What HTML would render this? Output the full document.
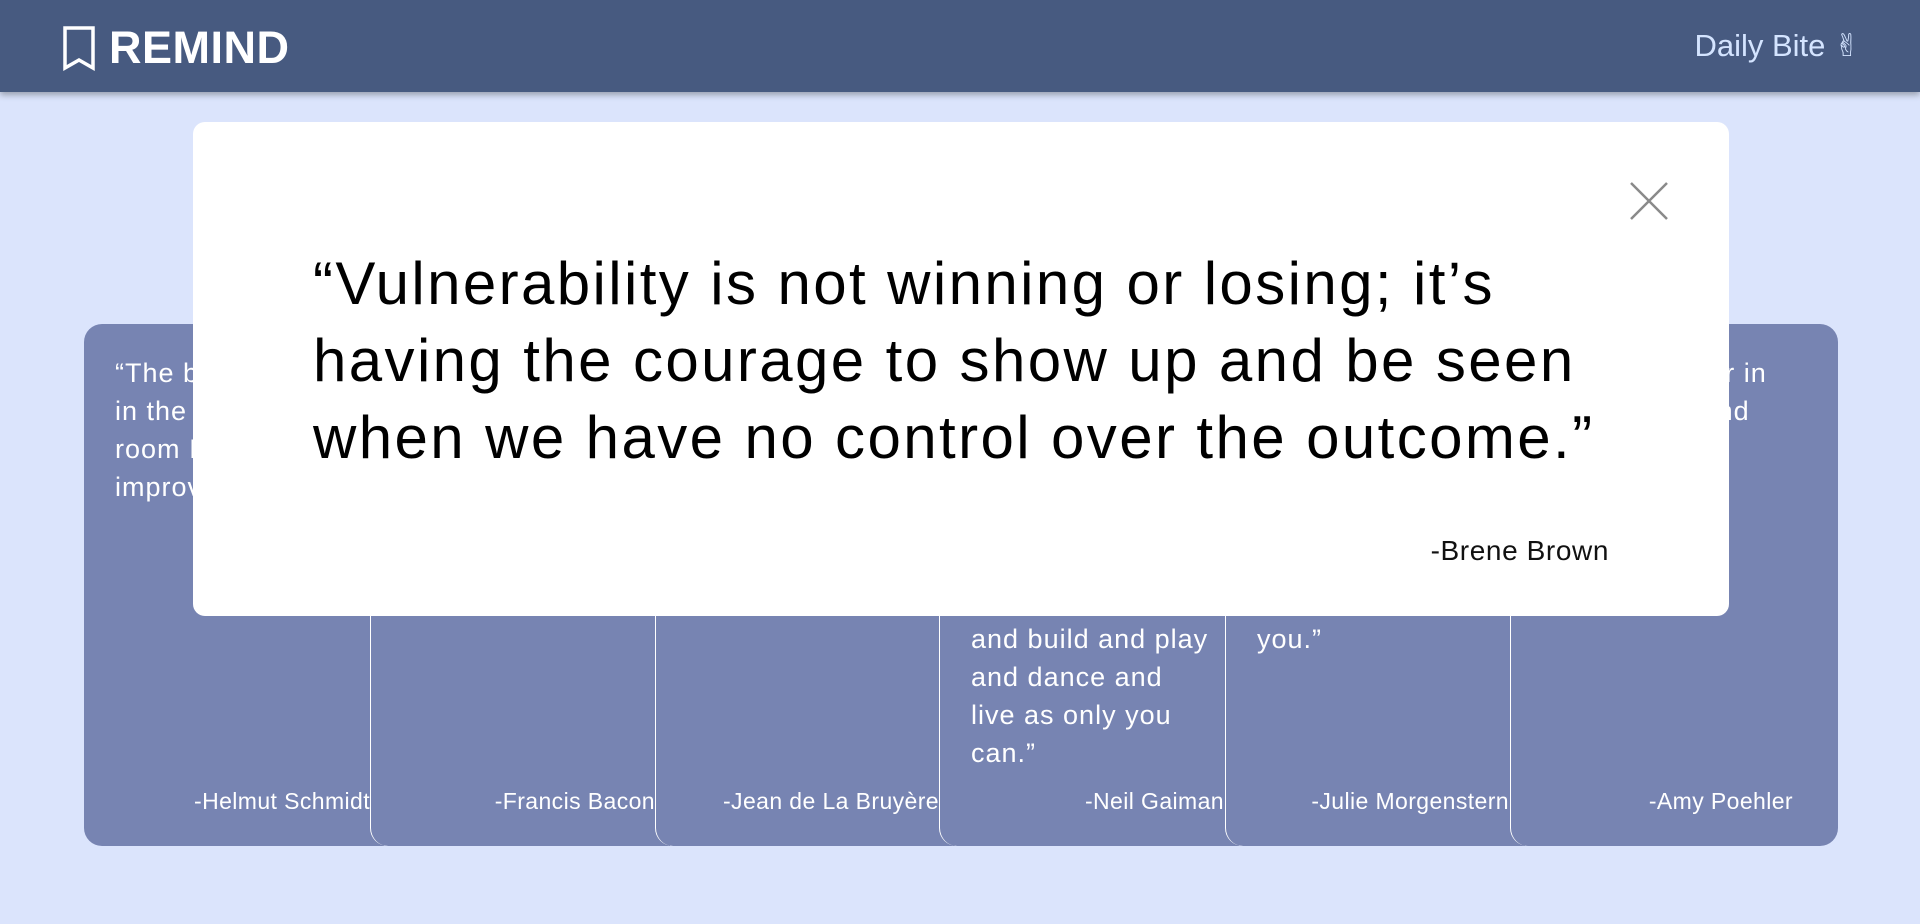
<!DOCTYPE html>
<html><head><meta charset="utf-8"><style>
*{margin:0;padding:0;box-sizing:border-box}
body{width:1920px;height:924px;overflow:hidden;background:#dbe4fc;font-family:"Liberation Sans","DejaVu Sans",sans-serif;position:relative}
.hdr{position:absolute;left:0;top:0;width:1920px;height:92px;background:#475a80;box-shadow:0 3px 6px rgba(0,0,0,.3);z-index:3}
.logo{position:absolute;left:109px;top:22px;color:#fff;font-size:45px;font-weight:bold;letter-spacing:0.5px}
.bm{position:absolute;left:62px;top:25px}
.db{position:absolute;right:60px;top:28px;color:#d4e4ff;font-size:31px}
.card{position:absolute;top:324px;height:522px;background:#7784b2;border-left:1px solid #fff;border-bottom-left-radius:18px;color:#fff}
.card .q{position:absolute;left:31px;top:30px;font-size:27px;line-height:38px;white-space:nowrap;letter-spacing:1px}
.card .a{position:absolute;right:0;top:464px;font-size:23px;white-space:nowrap;letter-spacing:0.4px}
.modal{position:absolute;left:193px;top:122px;width:1536px;height:494px;background:#fff;border-radius:12px;z-index:5}
.mq{position:absolute;left:120px;top:123px;font-size:60px;line-height:77px;color:#000;white-space:nowrap;letter-spacing:2.4px}
.ma{position:absolute;right:120px;top:413px;font-size:28px;color:#111;letter-spacing:0.6px}
.x{position:absolute;left:1436px;top:59px}
</style></head><body>
<div class="hdr">
<svg class="bm" width="34" height="46" viewBox="0 0 34 46"><path d="M3 3H31V43L17 35L3 43Z" fill="none" stroke="#fff" stroke-width="3.5" stroke-linejoin="miter"/></svg>
<div class="logo">REMIND</div>
<div class="db">Daily Bite ✌</div>
</div>

<div class="card" style="left:84px;width:300px;border-left:none;border-radius:18px 0 0 18px">
<div class="q">“The best ideas come<br>in the time and the<br>room I give myself to<br>improve”</div><div class="a" style="right:14px">-Helmut Schmidt</div></div>
<div class="card" style="left:370px;width:300px">
<div class="q">“Knowledge is power.”</div><div class="a" style="right:15px">-Francis Bacon</div></div>
<div class="card" style="left:655px;width:300px">
<div class="q">“Time is what we want<br>most, but what we use<br>worst.”</div><div class="a" style="right:16px">-Jean de La Bruyère</div></div>
<div class="card" style="left:939px;width:300px">
<div class="q">“Make glorious,<br>amazing mistakes.<br>Make mistakes<br>nobody's ever made<br>before. Now go,<br>and make interesting<br>mistakes, make art<br>and build and play<br>and dance and<br>live as only you<br>can.”</div><div class="a" style="right:15px">-Neil Gaiman</div></div>
<div class="card" style="left:1225px;width:300px">
<div class="q">“Never check email<br>in the morning.<br>If you do, the<br>day will be<br>driven by what<br>someone else<br>wants from<br>you.”</div><div class="a" style="right:16px">-Julie Morgenstern</div></div>
<div class="card" style="left:1510px;width:328px;border-radius:0 18px 18px 18px">
<div class="q">“There's power in<br>looking silly and<br>not caring that<br>you do.”</div><div class="a" style="right:45px">-Amy Poehler</div></div>

<div class="modal">
<svg class="x" width="40" height="40" viewBox="0 0 40 40"><path d="M2 2L38 38M38 2L2 38" stroke="#8a8a8a" stroke-width="2.5"/></svg>
<div class="mq">“Vulnerability is not winning or losing; it’s<br>having the courage to show up and be seen<br>when we have no control over the outcome.”</div>
<div class="ma">-Brene Brown</div>
</div>
</body></html>
